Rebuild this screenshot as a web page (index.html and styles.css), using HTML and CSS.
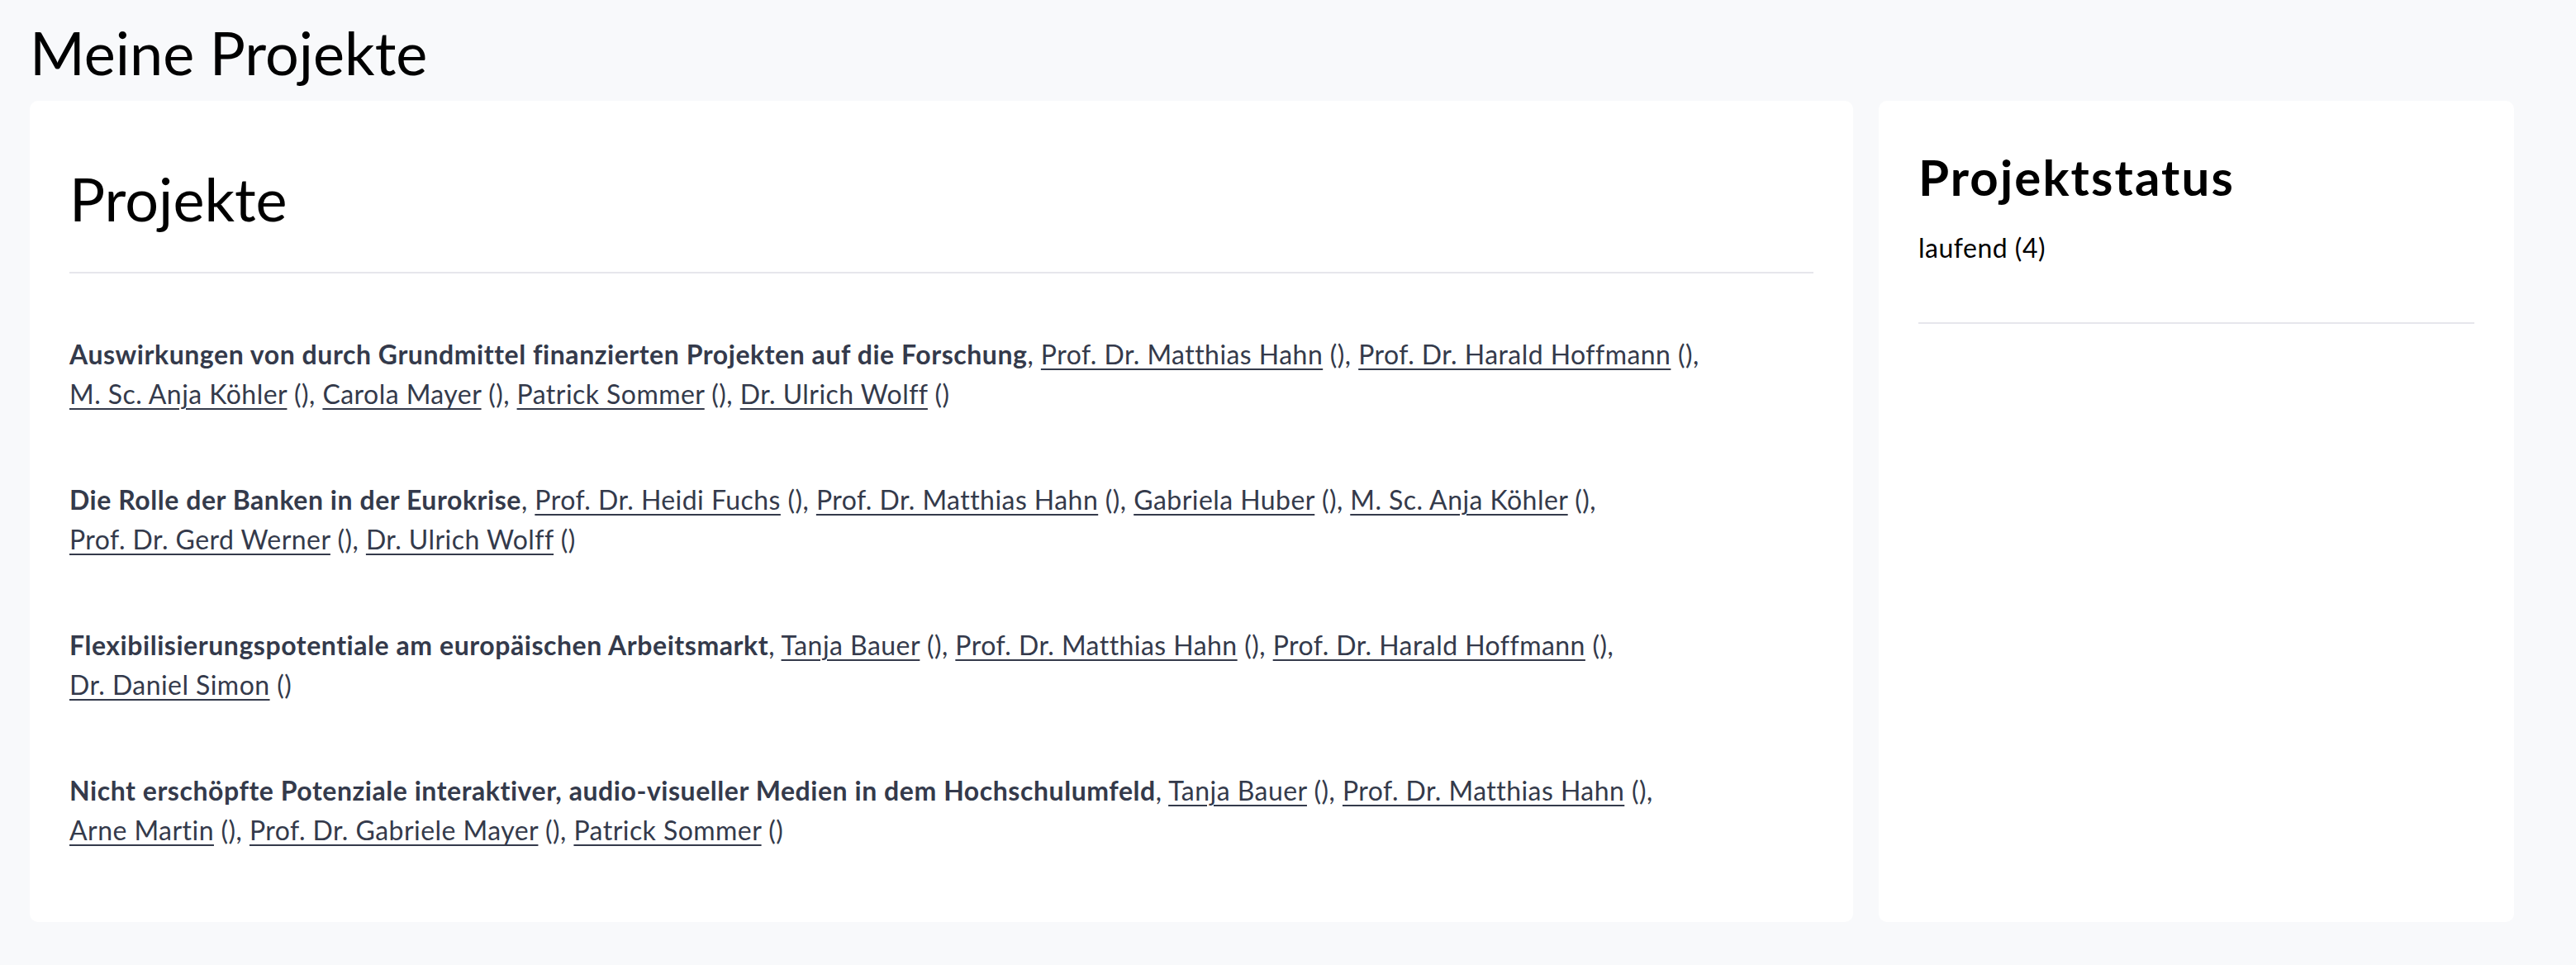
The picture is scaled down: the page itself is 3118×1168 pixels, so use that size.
FILE: index.html
```html
<!DOCTYPE html>
<html lang="de">
<head>
<meta charset="utf-8">
<title>Meine Projekte</title>
<link rel="stylesheet" href="styles.css">
</head>
<body>
<div class="page">
  <h1 class="page-title">Meine Projekte</h1>
  <div class="layout">
    <section class="card main">
      <h2 class="card-title">Projekte</h2>
      <hr class="sep">
      <div class="entries">
        <p class="entry"><strong>Auswirkungen von durch Grundmittel finanzierten Projekten auf die Forschung</strong>, <a href="#">Prof. Dr. Matthias Hahn</a> (), <a href="#">Prof. Dr. Harald Hoffmann</a> (),<br><a href="#">M. Sc. Anja Köhler</a> (), <a href="#">Carola Mayer</a> (), <a href="#">Patrick Sommer</a> (), <a href="#">Dr. Ulrich Wolff</a> ()</p>
        <p class="entry"><strong>Die Rolle der Banken in der Eurokrise</strong>, <a href="#">Prof. Dr. Heidi Fuchs</a> (), <a href="#">Prof. Dr. Matthias Hahn</a> (), <a href="#">Gabriela Huber</a> (), <a href="#">M. Sc. Anja Köhler</a> (),<br><a href="#">Prof. Dr. Gerd Werner</a> (), <a href="#">Dr. Ulrich Wolff</a> ()</p>
        <p class="entry"><strong>Flexibilisierungspotentiale am europäischen Arbeitsmarkt</strong>, <a href="#">Tanja Bauer</a> (), <a href="#">Prof. Dr. Matthias Hahn</a> (), <a href="#">Prof. Dr. Harald Hoffmann</a> (),<br><a href="#">Dr. Daniel Simon</a> ()</p>
        <p class="entry"><strong>Nicht erschöpfte Potenziale interaktiver, audio-visueller Medien in dem Hochschulumfeld</strong>, <a href="#">Tanja Bauer</a> (), <a href="#">Prof. Dr. Matthias Hahn</a> (),<br><a href="#">Arne Martin</a> (), <a href="#">Prof. Dr. Gabriele Mayer</a> (), <a href="#">Patrick Sommer</a> ()</p>
      </div>
    </section>
    <aside class="card side">
      <h2 class="side-title">Projektstatus</h2>
      <p class="status">laufend (4)</p>
      <hr class="sep side-sep">
    </aside>
  </div>
</div>
</body>
</html>
```

FILE: styles.css
```css
html, body {
  margin: 0;
  padding: 0;
  background: #f8f9fb;
}
body {
  font-family: Lato, "Open Sans", sans-serif;
  color: #343a4b;
}
.page {
  padding: 0 75px 0 36px;
}
.page-title {
  margin: 0;
  padding-top: 20px;
  height: 108px;
  box-sizing: border-box;
  font-size: 72px;
  font-weight: 400;
  line-height: 86px;
  color: #000;
}
.layout {
  display: grid;
  grid-template-columns: 1fr 769px;
  gap: 31px;
  margin-top: 14px;
}
.card {
  background: #fff;
  border-radius: 10px;
  padding: 48px;
}
.main {
  height: 994px;
  box-sizing: border-box;
}
.card-title {
  margin: 0;
  font-size: 72px;
  font-weight: 400;
  line-height: 86px;
  color: #000;
  padding-top: 27px;
}
.sep {
  border: 0;
  height: 2px;
  background: #e6e6ec;
  margin: 46px 0 0;
}
.entries {
  display: flex;
  flex-direction: column;
  gap: 80px;
  padding-top: 74px;
}
.entry {
  margin: 0;
  font-size: 32px;
  line-height: 48px;
  letter-spacing: 0.45px;
}
.entry strong {
  font-weight: 700;
  letter-spacing: 0.55px;
}
.entry a {
  color: inherit;
  text-decoration: underline;
  text-decoration-thickness: 2px;
  text-underline-offset: 5px;
}
.side-title {
  margin: 0;
  padding-top: 8px;
  font-size: 60px;
  font-weight: 700;
  line-height: 72px;
  letter-spacing: 2.1px;
  color: #000;
}
.status {
  margin: 26px 0 0;
  font-size: 32px;
  line-height: 48px;
  letter-spacing: 0.5px;
  color: #000;
}
.side-sep {
  margin-top: 66px;
}
```
